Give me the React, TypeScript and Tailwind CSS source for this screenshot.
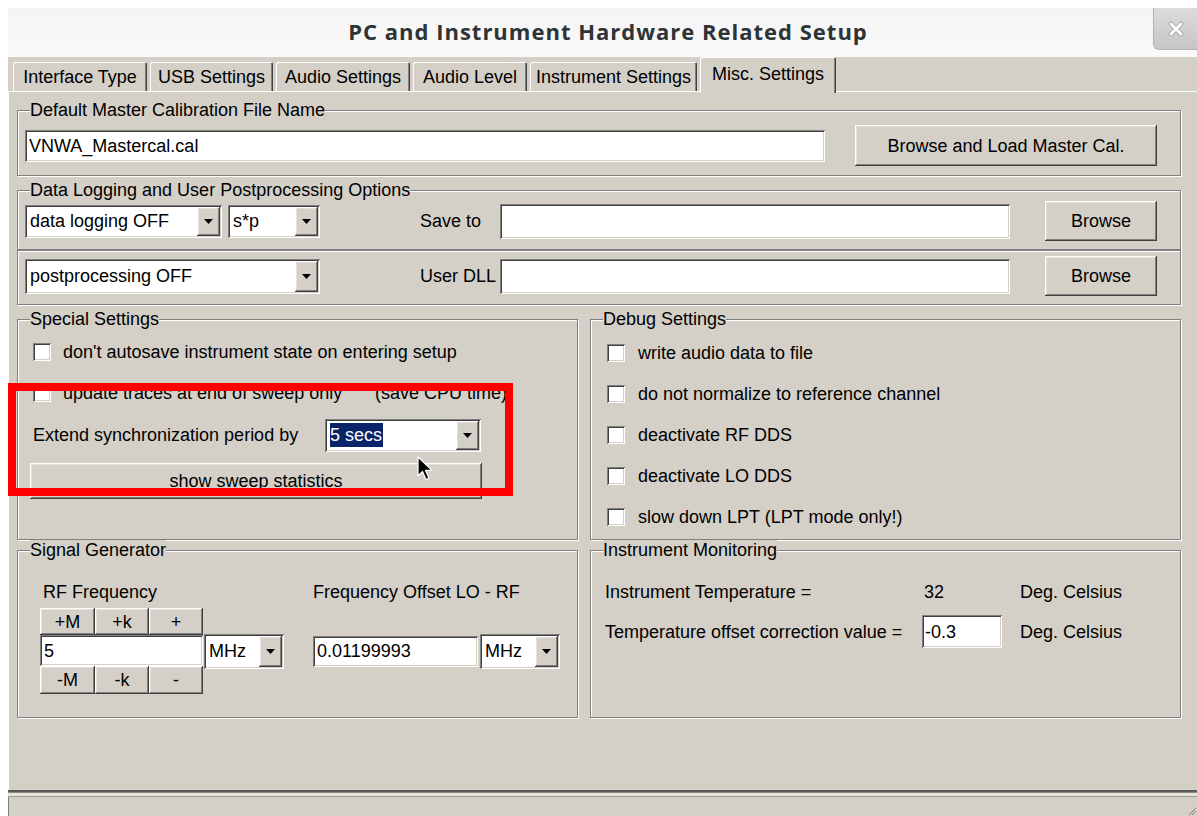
import React from "react";

// classic 3D bevels
const raised =
  "bg-[#d4d0c8] shadow-[inset_-1px_-1px_0_#404040,inset_1px_1px_0_#ffffff,inset_-2px_-2px_0_#808080,inset_2px_2px_0_#e4e1db]";
const sunken =
  "bg-white shadow-[inset_1px_1px_0_#808080,inset_-1px_-1px_0_#ffffff,inset_2px_2px_0_#404040,inset_-2px_-2px_0_#d4d0c8]";
const etched = "border border-[#808080] shadow-[inset_1px_1px_0_#ffffff,1px_1px_0_#ffffff]";
const tabEdge = "rounded-t-[2px] shadow-[inset_1px_1px_0_#ffffff,inset_-1px_0_0_#404040,inset_-2px_0_0_#808080]";

const tabs = [
  { label: "Interface Type", w: "w-[134px]" },
  { label: "USB Settings", w: "w-[123px]" },
  { label: "Audio Settings", w: "w-[134px]" },
  { label: "Audio Level", w: "w-[114px]" },
  { label: "Instrument Settings", w: "w-[167px]" },
];

const DropArrow: React.FC = () => (
  <div className={`${raised} w-[23px] shrink-0 flex items-center justify-center`}>
    <svg width="9" height="5" viewBox="0 0 9 5">
      <path d="M0 0h9L4.5 5z" fill="#000" />
    </svg>
  </div>
);

const Combo: React.FC<{ value: string; className: string; selected?: boolean }> = ({ value, className, selected }) => (
  <div className={`${sunken} flex items-stretch p-[2px] shrink-0 ${className}`}>
    <div className="flex-1 flex items-center pl-[3px] overflow-hidden whitespace-nowrap">
      {selected ? <span className="bg-[#0a246a] text-white pr-[1px] leading-[24px]">{value}</span> : value}
    </div>
    <DropArrow />
  </div>
);

const TextBox: React.FC<{ value?: string; className: string }> = ({ value, className }) => (
  <div className={`${sunken} flex items-center pl-[4px] shrink-0 whitespace-nowrap ${className}`}>{value}</div>
);

const Button: React.FC<{ label: string; className: string }> = ({ label, className }) => (
  <div className={`${raised} flex items-center justify-center shrink-0 whitespace-nowrap ${className}`}>{label}</div>
);

const Check: React.FC<{ children: React.ReactNode; gap: string }> = ({ children, gap }) => (
  <div className="flex items-center h-[41px]">
    <span className={`${sunken} w-[18px] h-[18px] shrink-0`} />
    <span className={`${gap} whitespace-nowrap`}>{children}</span>
  </div>
);

const Group: React.FC<{ title: string; className: string; children: React.ReactNode }> = ({ title, className, children }) => (
  <fieldset className={`${etched} ${className}`}>
    <legend className="ml-[12px] bg-[#d4d0c8] leading-[20px]">{title}</legend>
    {children}
  </fieldset>
);

const App: React.FC = () => {
  return (
    <div className="relative w-[1197px] h-[816px] overflow-hidden bg-white text-black text-[18px] leading-[20px] font-['Liberation_Sans',Arial,sans-serif] flex flex-col">
      <div className="h-[8px] shrink-0" />

      <div className="ml-[8px] flex-1 min-h-0 flex flex-col">
        {/* Title bar */}
        <div className="h-[49px] shrink-0 flex bg-gradient-to-b from-[#f4f4f4] to-[#fafafa]">
          <div className="flex-1 flex items-center justify-center pl-[55px] pb-[4px] text-[22px] font-bold tracking-[1px] text-[#2e3436] font-['Open_Sans',sans-serif]">
            PC and Instrument Hardware Related Setup
          </div>
          <div className="w-[44px] h-[42px] flex items-center justify-center rounded-bl-[6px] border-l border-b border-[#b3b3b3] bg-gradient-to-b from-[#dcdcdc] to-[#c6c6c6]">
            <svg width="16" height="16" viewBox="0 0 16 16">
              <path d="M3 3l10 10M13 3L3 13" stroke="#9a9a9a" strokeWidth="4.5" strokeLinecap="round" />
              <path d="M3 3l10 10M13 3L3 13" stroke="#ffffff" strokeWidth="3" strokeLinecap="round" />
            </svg>
          </div>
        </div>

        <div className="flex-1 min-h-0 flex flex-col bg-[#d4d0c8]">
          {/* Tabs */}
          <div className="h-[34px] shrink-0 flex items-end pl-[5px] gap-[3px]">
            {tabs.map((t) => (
              <div key={t.label} className={`${t.w} ${tabEdge} h-[29px] flex items-center justify-center whitespace-nowrap`}>
                {t.label}
              </div>
            ))}
            <div className={`${tabEdge} relative z-10 w-[136px] h-[36px] -mb-[2px] pb-[3px] flex items-center justify-center whitespace-nowrap bg-[#d4d0c8]`}>
              Misc. Settings
            </div>
          </div>

          {/* Tab page */}
          <div className="flex-1 min-h-0 border-t border-l border-white pl-[8px] flex flex-col">
            <Group title="Default Master Calibration File Name" className="w-[1164px] mt-[8px]">
              <div className="flex items-center pl-[7px] pt-[5px] pb-[9px]">
                <TextBox value="VNWA_Mastercal.cal" className="w-[800px] h-[32px]" />
                <Button label="Browse and Load Master Cal." className="ml-[30px] w-[302px] h-[41px]" />
              </div>
            </Group>

            <Group title="Data Logging and User Postprocessing Options" className="w-[1164px] mt-[4px]">
              <div className="flex items-center pl-[7px] pt-[1px] pb-[8px]">
                <div className="w-[395px] h-[40px] flex items-center gap-[6px]">
                  <Combo value="data logging OFF" className="w-[197px] h-[33px]" />
                  <Combo value="s*p" className="w-[92px] h-[33px]" />
                </div>
                <span className="w-[80px]">Save to</span>
                <TextBox className="w-[510px] h-[35px]" />
                <Button label="Browse" className="ml-[35px] w-[112px] h-[40px]" />
              </div>
            </Group>
            <div className={`${etched} w-[1164px] flex items-center pl-[7px] pt-[5px] pb-[8px]`}>
              <div className="w-[395px] h-[40px] flex items-center">
                <Combo value="postprocessing OFF" className="w-[295px] h-[35px]" />
              </div>
              <span className="w-[80px]">User DLL</span>
              <TextBox className="w-[510px] h-[35px]" />
              <Button label="Browse" className="ml-[35px] w-[112px] h-[40px]" />
            </div>

            <div className="flex gap-[12px] mt-[4px]">
              <Group title="Special Settings" className="w-[561px] h-[231px]">
                <div className="pl-[15px] pt-[2px]">
                  <Check gap="ml-[12px]">don't autosave instrument state on entering setup</Check>
                  <Check gap="ml-[12px]">
                    <span className="inline-block w-[312px]">update traces at end of sweep only</span>
                    (save CPU time)
                  </Check>
                  <div className="h-[41px] pt-[3px] flex items-center">
                    <span className="w-[292px] whitespace-nowrap">Extend synchronization period by</span>
                    <Combo value="5 secs" selected className="w-[156px] h-[33px]" />
                  </div>
                  <Button label="show sweep statistics" className="-ml-[3px] mt-[9px] w-[452px] h-[36px]" />
                </div>
              </Group>

              <Group title="Debug Settings" className="w-[591px] h-[231px]">
                <div className="pl-[16px] pt-[3px]">
                  <Check gap="ml-[13px]">write audio data to file</Check>
                  <Check gap="ml-[13px]">do not normalize to reference channel</Check>
                  <Check gap="ml-[13px]">deactivate RF DDS</Check>
                  <Check gap="ml-[13px]">deactivate LO DDS</Check>
                  <Check gap="ml-[13px]">slow down LPT (LPT mode only!)</Check>
                </div>
              </Group>
            </div>

            <div className="flex gap-[12px]">
              <Group title="Signal Generator" className="w-[561px] h-[178px]">
                <div className="flex pl-[22px] pt-[22px]">
                  <div>
                    <div className="h-[20px] pl-[3px]">RF Frequency</div>
                    <div className="mt-[6px] flex items-center">
                      <div className="w-[163px]">
                        <div className="flex h-[27px]">
                          <Button label="+M" className="w-[55px] h-[27px]" />
                          <Button label="+k" className="w-[54px] h-[27px]" />
                          <Button label="+" className="w-[54px] h-[27px]" />
                        </div>
                        <TextBox value="5" className="w-[163px] h-[31px]" />
                        <div className="flex h-[28px]">
                          <Button label="-M" className="w-[55px] h-[28px]" />
                          <Button label="-k" className="w-[54px] h-[28px]" />
                          <Button label="-" className="w-[54px] h-[28px]" />
                        </div>
                      </div>
                      <Combo value="MHz" className="ml-[1px] w-[80px] h-[35px]" />
                    </div>
                  </div>
                  <div className="ml-[29px]">
                    <div className="h-[20px]">Frequency Offset LO - RF</div>
                    <div className="mt-[6px] h-[86px] flex items-center">
                      <TextBox value="0.01199993" className="w-[165px] h-[31px]" />
                      <Combo value="MHz" className="ml-[2px] w-[80px] h-[35px]" />
                    </div>
                  </div>
                </div>
              </Group>

              <Group title="Instrument Monitoring" className="w-[591px] h-[178px]">
                <div className="pl-[14px] pt-[22px]">
                  <div className="h-[20px] flex items-center whitespace-nowrap">
                    <span className="w-[317px]">Instrument Temperature =</span>
                    <span className="w-[98px] pl-[2px]">32</span>
                    <span>Deg. Celsius</span>
                  </div>
                  <div className="mt-[13px] h-[33px] flex items-center whitespace-nowrap">
                    <span className="w-[317px]">Temperature offset correction value =</span>
                    <TextBox value="-0.3" className="w-[80px] h-[33px] !pl-[3px]" />
                    <span className="ml-[18px]">Deg. Celsius</span>
                  </div>
                </div>
              </Group>
            </div>
          </div>

          {/* Status bar */}
          <div className="h-[2px] shrink-0 bg-[#5b5b5b]" />
          <div className="h-[1px] shrink-0 bg-[#8c8a86]" />
          <div className="h-[3px] shrink-0 bg-[#e6e3dc]" />
          <div className="h-[1px] shrink-0 bg-[#9c9a95]" />
          <div className="h-[19px] shrink-0 flex justify-end items-end border-l border-[#808080]">
            <svg width="10" height="10" viewBox="0 0 10 10">
              <path d="M9 2L2 9M9 5L5 9" stroke="#808080" strokeWidth="1" />
            </svg>
          </div>
        </div>
      </div>

      {/* annotation frame and pointer */}
      <div className="absolute left-[8px] top-[383px] w-[505px] h-[113px] border-[8px] border-[#ff0000]" />
      <svg className="absolute left-[417px] top-[456px]" width="16" height="26" viewBox="0 0 16 26">
        <path d="M1 1v19l4.5-4.5 3.5 8 3-1.3-3.5-7.8H15z" fill="#000" stroke="#fff" strokeWidth="1.2" strokeLinejoin="round" />
      </svg>
    </div>
  );
};

export default App;
